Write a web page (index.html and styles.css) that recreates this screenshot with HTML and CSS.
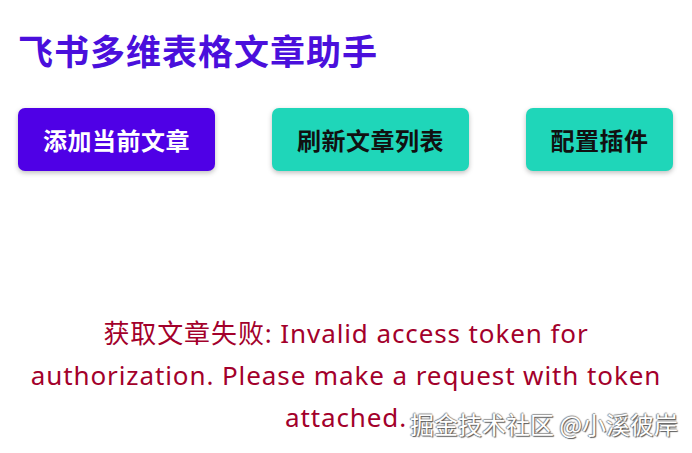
FILE: index.html
```html
<!DOCTYPE html>
<html lang="zh">
<head>
<meta charset="utf-8">
<link rel="stylesheet" href="styles.css">
</head>
<body>
<div class="app">
  <h1 class="title">飞书多维表格文章助手</h1>
  <div class="actions">
    <button class="btn btn-primary btn-wide">添加当前文章</button>
    <button class="btn btn-teal btn-wide">刷新文章列表</button>
    <button class="btn btn-teal btn-narrow">配置插件</button>
  </div>
  <p class="error">获取文章失败: Invalid access token for authorization. Please make a request with token attached.</p>
</div>
<div class="watermark">掘金技术社区 @小溪彼岸</div>
</body>
</html>
```
FILE: styles.css
```css
html, body {
  margin: 0;
  padding: 0;
  background: #ffffff;
}
body {
  width: 692px;
  height: 453px;
  overflow: hidden;
  position: relative;
  font-family: "Noto Sans CJK SC", "Noto Sans", sans-serif;
}
.app {
  padding: 25px 18px 0 18px;
}
.title {
  margin: 0;
  font-size: 35px;
  line-height: 50px;
  font-weight: 700;
  color: #4a0fdc;
  letter-spacing: 1px;
}
.actions {
  display: flex;
  justify-content: space-between;
  margin-top: 33px;
  padding-right: 1px;
}
.btn {
  height: 63px;
  border: none;
  border-radius: 7px;
  font-family: "Noto Sans CJK SC", sans-serif;
  font-size: 24px;
  font-weight: 700;
  letter-spacing: 0.5px;
  padding: 0;
  box-shadow: 0 2px 5px rgba(0, 0, 0, 0.25);
}
.btn-wide {
  width: 197px;
}
.btn-narrow {
  width: 147px;
}
.btn-primary {
  background: #4f00e6;
  color: #ffffff;
}
.btn-teal {
  background: #1fd6b9;
  color: #111111;
}
.error {
  margin: 141px auto 0 auto;
  max-width: 640px;
  text-align: center;
  font-family: "Noto Sans", "Noto Sans CJK SC", sans-serif;
  font-size: 26px;
  letter-spacing: 0.9px;
  line-height: 42px;
  color: #a3002b;
}
.watermark {
  position: absolute;
  left: 410px;
  top: 412px;
  font-family: "Noto Sans CJK SC", sans-serif;
  font-size: 24px;
  line-height: 24px;
  color: #ffffff;
  text-shadow: 1px 1px 1px #555, -1px 0 1px #888, 0 -1px 1px #999;
}
```
